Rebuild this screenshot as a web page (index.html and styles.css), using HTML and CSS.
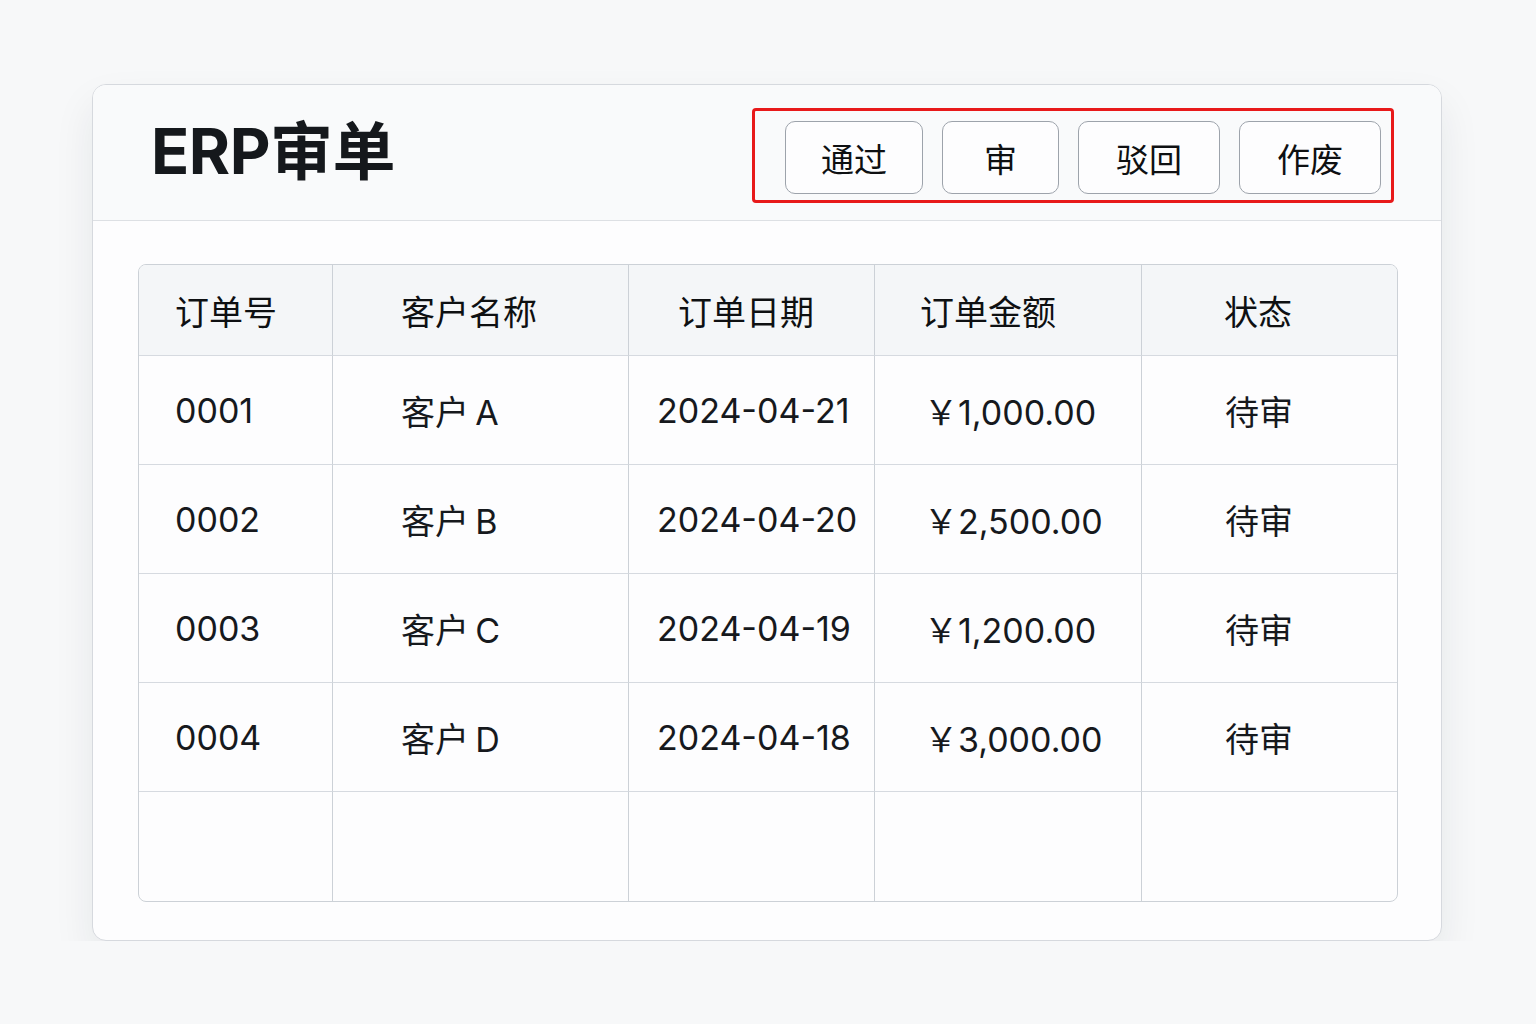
FILE: index.html
```html
<!DOCTYPE html>
<html lang="zh-CN">
<head>
  <meta charset="UTF-8">
  <title>ERP审单</title>
  <link rel="stylesheet" href="styles.css">
</head>
<body>

  <div class="card">
    <div class="card-header">
      <h1>ERP审单</h1>
      <div class="actions">
        <button class="btn">通过</button>
        <button class="btn btn-single">审</button>
        <button class="btn btn-wide">驳回</button>
        <button class="btn btn-wide">作废</button>
      </div>
    </div>

    <div class="card-body">
      <table class="orders">
        <colgroup>
          <col class="w1"><col class="w2"><col class="w3"><col class="w4"><col class="w5">
        </colgroup>
        <thead>
          <tr>
            <th class="c1">订单号</th>
            <th class="c2">客户名称</th>
            <th class="c3">订单日期</th>
            <th class="c4">订单金额</th>
            <th class="c5">状态</th>
          </tr>
        </thead>
        <tbody>
          <tr>
            <td class="c1">0001</td>
            <td class="c2">客户&thinsp;A</td>
            <td class="c3">2024-04-21</td>
            <td class="c4">￥1,000.00</td>
            <td class="c5">待审</td>
          </tr>
          <tr>
            <td class="c1">0002</td>
            <td class="c2">客户&thinsp;B</td>
            <td class="c3">2024-04-20</td>
            <td class="c4">￥2,500.00</td>
            <td class="c5">待审</td>
          </tr>
          <tr>
            <td class="c1">0003</td>
            <td class="c2">客户&thinsp;C</td>
            <td class="c3">2024-04-19</td>
            <td class="c4">￥1,200.00</td>
            <td class="c5">待审</td>
          </tr>
          <tr>
            <td class="c1">0004</td>
            <td class="c2">客户&thinsp;D</td>
            <td class="c3">2024-04-18</td>
            <td class="c4">￥3,000.00</td>
            <td class="c5">待审</td>
          </tr>
          <tr class="empty">
            <td></td><td></td><td></td><td></td><td></td>
          </tr>
        </tbody>
      </table>
    </div>
  </div>

</body>
</html>
```

FILE: styles.css
```css
body {
  margin: 0;
  font-family: Inter, "Noto Sans CJK SC", sans-serif;
  background: #f7f8f9;
  color: #16191d;
  padding: 84px 0 0 92px;
}

.card {
  width: 1348px;
  background: #fdfdfe;
  border: 1px solid #d6d9de;
  border-radius: 14px;
  box-shadow: 0 20px 40px rgba(30, 40, 55, 0.08);
  overflow: hidden;
}

.card-header {
  display: flex;
  align-items: center;
  justify-content: space-between;
  height: 135px;
  padding: 0 47px 0 58px;
  background: #f9fafb;
  border-bottom: 1px solid #dde0e4;
}

h1 {
  margin: -12px 0 0;
  font-size: 63px;
  font-weight: 700;
  letter-spacing: -0.5px;
  color: #15181c;
}

.actions {
  display: flex;
  gap: 19px;
  padding: 10px 10px 6px 30px;
  margin-top: 6px;
  border: 3px solid #e8191a;
  border-radius: 4px;
}

.btn {
  height: 73px;
  padding: 0 35px;
  font-family: inherit;
  font-size: 33px;
  color: #0e1012;
  background: #fdfdfe;
  border: 1px solid #9da3ab;
  border-radius: 10px;
}

.btn-single {
  min-width: 117px;
}

.btn-wide {
  min-width: 142px;
}

.card-body {
  padding: 43px 44px 38px 45px;
}

.orders {
  width: 1258px;
  table-layout: fixed;
  border-collapse: separate;
  border-spacing: 0;
  border: 1px solid #ccd1d7;
  border-radius: 8px;
  overflow: hidden;
  font-size: 34px;
}

.w1 { width: 194px; }
.w2 { width: 296px; }
.w3 { width: 246px; }
.w4 { width: 267px; }
.w5 { width: 255px; }

th, td {
  text-align: left;
  padding: 0;
  border-right: 1px solid #ccd1d7;
  border-bottom: 1px solid #d6dae0;
  white-space: nowrap;
}

th:last-child, td:last-child {
  border-right: none;
}

.empty td {
  border-bottom: none;
}

thead tr {
  height: 91px;
  background: #f4f6f8;
}

th {
  font-weight: 400;
  color: #0e1012;
}

tbody tr {
  height: 109px;
}

th.c1, td.c1 { padding-left: 36px; }
th.c2, td.c2 { padding-left: 68px; }
th.c3 { padding-left: 49px; }
td.c3 { padding-left: 28px; }
th.c4 { padding-left: 45px; }
td.c4 { padding-left: 49px; }
th.c5 { padding-left: 82px; }
td.c5 { padding-left: 83px; }
```
